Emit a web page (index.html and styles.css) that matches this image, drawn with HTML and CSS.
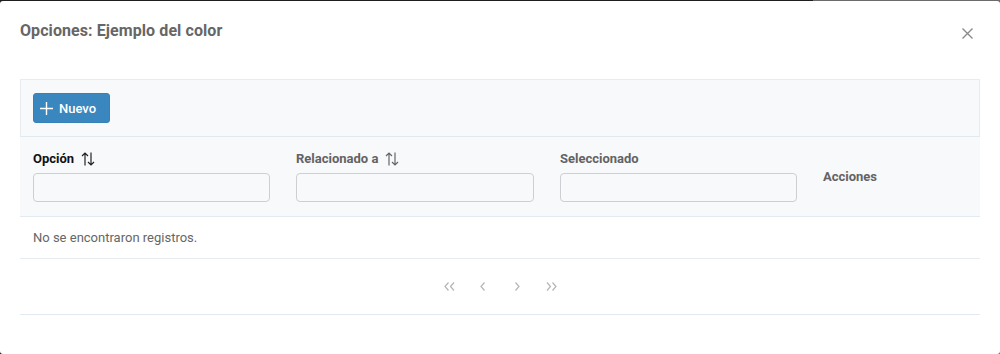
FILE: index.html
```html
<!DOCTYPE html>
<html lang="es">
<head>
<meta charset="utf-8">
<title>Opciones: Ejemplo del color</title>
<link rel="stylesheet" href="styles.css">
</head>
<body>
<div class="dialog">
  <div class="dialog-header">
    <h1 class="dialog-title">Opciones: Ejemplo del color</h1>
    <button class="close-btn" aria-label="Cerrar">
      <svg width="11" height="11" viewBox="0 0 11 11"><path d="M0.5 0.5L10.5 10.5M10.5 0.5L0.5 10.5" stroke="#8a8a8a" stroke-width="1.4" fill="none"/></svg>
    </button>
  </div>
  <div class="dialog-content">
    <div class="toolbar">
      <button class="btn-new">
        <svg width="13" height="13" viewBox="0 0 13 13"><path d="M6.5 0V13M0 6.5H13" stroke="#fff" stroke-width="1.4" fill="none"/></svg>
        <span>Nuevo</span>
      </button>
    </div>
    <div class="table-head">
      <div class="th">
        <div class="th-label active">Opción
          <svg class="sort" width="14" height="14" viewBox="0 0 14 14"><path d="M4 13.5V1M1 4L4 1L7 4M10 0.5V13M7 10L10 13L13 10" stroke="#222" stroke-width="1.2" fill="none"/></svg>
        </div>
        <input class="filter" type="text">
      </div>
      <div class="th">
        <div class="th-label">Relacionado a
          <svg class="sort" width="14" height="14" viewBox="0 0 14 14"><path d="M4 13.5V1M1 4L4 1L7 4M10 0.5V13M7 10L10 13L13 10" stroke="#666" stroke-width="1.2" fill="none"/></svg>
        </div>
        <input class="filter" type="text">
      </div>
      <div class="th">
        <div class="th-label">Seleccionado</div>
        <input class="filter" type="text">
      </div>
      <div class="th th-center">
        <div class="th-label">Acciones</div>
      </div>
    </div>
    <div class="table-row">No se encontraron registros.</div>
    <div class="paginator">
      <span class="pg"><svg width="11" height="9" viewBox="0 0 11 9"><path d="M4.5 0.5L1 4.5L4.5 8.5M10 0.5L6.5 4.5L10 8.5" stroke="#b5b5b5" stroke-width="1.2" fill="none"/></svg></span>
      <span class="pg"><svg width="6" height="9" viewBox="0 0 6 9"><path d="M4.5 0.5L1 4.5L4.5 8.5" stroke="#b5b5b5" stroke-width="1.2" fill="none"/></svg></span>
      <span class="pg"><svg width="6" height="9" viewBox="0 0 6 9"><path d="M1.5 0.5L5 4.5L1.5 8.5" stroke="#b5b5b5" stroke-width="1.2" fill="none"/></svg></span>
      <span class="pg"><svg width="11" height="9" viewBox="0 0 11 9"><path d="M1 0.5L4.5 4.5L1 8.5M6.5 0.5L10 4.5L6.5 8.5" stroke="#b5b5b5" stroke-width="1.2" fill="none"/></svg></span>
    </div>
  </div>
</div>
</body>
</html>
```
FILE: styles.css
```css
html, body {
  margin: 0;
  padding: 0;
  height: 354px;
  overflow: hidden;
}
body {
  background: linear-gradient(to right, #1e1e1e 0, #1e1e1e 813px, #6b6b6b 813px, #6b6b6b 100%);
  font-family: Roboto, "Liberation Sans", sans-serif;
}
.dialog {
  margin-top: 1px;
  height: 353px;
  background: #fff;
  border-radius: 3px;
  box-sizing: border-box;
}
.dialog-header {
  height: 60px;
  box-sizing: border-box;
  padding: 20px 27px 0 20px;
  display: flex;
  justify-content: space-between;
  align-items: flex-start;
}
.dialog-title {
  margin: 0;
  font-size: 16px;
  line-height: 20px;
  font-weight: 700;
  color: #666;
  letter-spacing: 0.08px;
}
.close-btn {
  margin-top: 6px;
  width: 12px;
  height: 12px;
  padding: 0;
  border: 0;
  background: none;
  display: flex;
  align-items: center;
  justify-content: center;
}
.dialog-content {
  padding: 18px 20px 0 20px;
}
.toolbar {
  background: #f8f9fb;
  border: 1px solid #e8ecf0;
  border-bottom-color: #e2e8ef;
  padding: 13px 12px;
}
.btn-new {
  height: 30px;
  width: 77px;
  box-sizing: border-box;
  display: flex;
  align-items: center;
  gap: 6px;
  padding: 0 0 0 6px;
  border: 1px solid #3582b9;
  border-radius: 3px;
  background: #3a87bf;
  color: #fff;
  font-family: Roboto, "Liberation Sans", sans-serif;
  font-size: 13px;
  font-weight: 500;
}
.table-head {
  display: grid;
  grid-template-columns: 263px 264px 263px 170px;
  background: #f8f9fb;
  border-bottom: 1px solid #e3eaf2;
}
.th {
  padding: 14px 13px 14px 13px;
  display: flex;
  flex-direction: column;
  gap: 7px;
}
.th-center {
  justify-content: center;
}
.th-label {
  font-size: 13px;
  line-height: 15px;
  font-weight: 700;
  color: #636363;
  display: flex;
  align-items: center;
  gap: 7px;
}
.th-label.active {
  color: #111;
}
.filter {
  height: 29px;
  box-sizing: border-box;
  width: 100%;
  border: 1px solid #cdcfd2;
  border-radius: 4px;
  background: #f8f9fb;
  margin: 0;
}
.table-row {
  padding: 13px;
  font-size: 13px;
  line-height: 15px;
  color: #666;
  border-bottom: 1px solid #e8ecf0;
}
.paginator {
  height: 55px;
  display: flex;
  justify-content: center;
  align-items: center;
  border-bottom: 1px solid #e3eaf2;
}
.pg {
  width: 34px;
  display: flex;
  justify-content: center;
  align-items: center;
  height: 20px;
}
```
